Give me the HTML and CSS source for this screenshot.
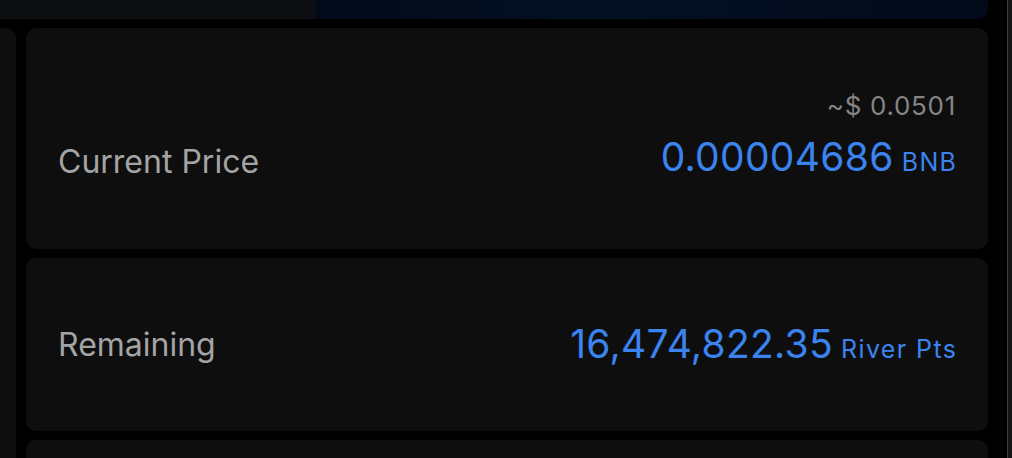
FILE: index.html
```html
<!DOCTYPE html>
<html lang="en">

<head>
    <meta charset="UTF-8">
    <meta name="viewport" content="width=device-width, initial-scale=1.0">
    <title>Sale stats</title>
    <link rel="stylesheet" href="styles.css">
</head>

<body>
    <div class="page">
        <div class="banner"></div>
        <div class="layout">
            <div class="side-card"></div>
            <div class="stats">
                <div class="stat-card price-card">
                    <span class="stat-label">Current Price</span>
                    <div class="stat-value">
                        <span class="stat-sub">~$ 0.0501</span>
                        <div class="stat-main">
                            <span class="num">0.00004686</span>
                            <span class="unit">BNB</span>
                        </div>
                    </div>
                </div>
                <div class="stat-card remain-card">
                    <span class="stat-label">Remaining</span>
                    <div class="stat-value">
                        <div class="stat-main">
                            <span class="num">16,474,822.35</span>
                            <span class="unit">River Pts</span>
                        </div>
                    </div>
                </div>
                <!-- next card, cut by the window -->
                <div class="stat-card next-card"></div>
            </div>
        </div>
    </div>
    <div class="scroll-track"></div>
</body>

</html>
```

FILE: styles.css
```css
:root {
    --bg: #000000;
    --card: #0e0e0e;
    --label: #a4a4a4;
    --muted: #858585;
    --blue: #3b84ef;
}

html,
body {
    margin: 0;
    height: 100%;
    overflow: hidden;
    background-color: var(--bg);
    font-family: Inter, 'Noto Sans', sans-serif;
}

body {
    display: flex;
}

.page {
    width: 989px;
    display: flex;
    flex-direction: column;
}

.banner {
    height: 19px;
    border-bottom-right-radius: 10px;
    background: linear-gradient(90deg, #0d0e10 0%, #0d0e11 31.7%, #020a19 32.1%, #031024 60%, #020a1a 100%);
}

.layout {
    flex: 1;
    display: flex;
    gap: 10px;
    margin-top: 9px;
}

.side-card {
    width: 16px;
    background-color: var(--card);
    border-top-right-radius: 10px;
}

.stats {
    flex: 1;
    display: flex;
    flex-direction: column;
    gap: 9px;
}

.stat-card {
    background-color: var(--card);
    border-radius: 10px;
    padding: 0 32px;
    height: 173px;
    display: flex;
    justify-content: space-between;
    align-items: center;
    line-height: 1;
}

.price-card {
    height: 221px;
    align-items: flex-end;
    padding-bottom: 73px;
    box-sizing: border-box;
}

.price-card .stat-label {
    margin-bottom: -2px;
}

.next-card {
    height: 18px;
    border-bottom-left-radius: 0;
    border-bottom-right-radius: 0;
}

.stat-label {
    color: var(--label);
    font-size: 32px;
}

.stat-value {
    display: flex;
    flex-direction: column;
    align-items: flex-end;
}

.remain-card .stat-value {
    margin-top: -2px;
}

.stat-sub {
    color: var(--muted);
    font-size: 26px;
    letter-spacing: 0.7px;
    margin-bottom: 18px;
}

.stat-main {
    display: flex;
    align-items: baseline;
    gap: 8px;
    color: var(--blue);
}

.num {
    font-size: 39px;
    letter-spacing: 0.3px;
}

.unit {
    font-size: 25px;
    letter-spacing: 1.4px;
    margin-right: -1.4px;
}

.scroll-track {
    margin-left: 19px;
    width: 4px;
    border-left: 1px solid #3c3c3c;
    background-color: #161616;
}
```
